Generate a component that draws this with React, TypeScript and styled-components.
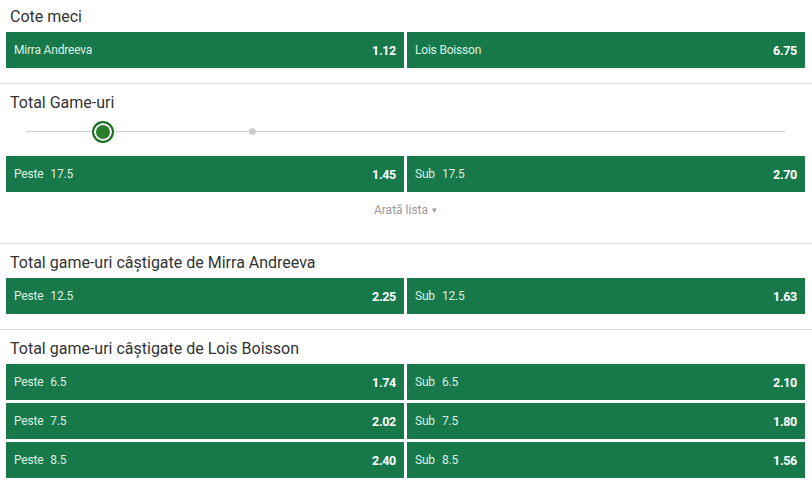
import React from 'react';
import styled, { createGlobalStyle } from 'styled-components';

const GlobalStyle = createGlobalStyle`
  html, body {
    margin: 0;
    padding: 0;
    background: #ffffff;
    font-family: Roboto, 'Liberation Sans', sans-serif;
  }
`;

interface IOdd {
  label: string;
  line?: string;
  price: string;
}

const rowsLois: IOdd[][] = [
  [
    { label: 'Peste', line: '6.5', price: '1.74' },
    { label: 'Sub', line: '6.5', price: '2.10' },
  ],
  [
    { label: 'Peste', line: '7.5', price: '2.02' },
    { label: 'Sub', line: '7.5', price: '1.80' },
  ],
  [
    { label: 'Peste', line: '8.5', price: '2.40' },
    { label: 'Sub', line: '8.5', price: '1.56' },
  ],
];

const OddButton = ({ odd }: { odd: IOdd }) => (
  <Odd>
    <OddLabel>
      {odd.label}
      {odd.line && <OddLine>{odd.line}</OddLine>}
    </OddLabel>
    <OddPrice>{odd.price}</OddPrice>
  </Odd>
);

const OddsRows = ({ rows }: { rows: IOdd[][] }) => (
  <Rows>
    {rows.map((row, i) => (
      <Row key={i}>
        {row.map((odd, j) => (
          <OddButton key={j} odd={odd} />
        ))}
      </Row>
    ))}
  </Rows>
);

export default function App() {
  return (
    <>
      <GlobalStyle />
      <Page>
        <Market $first>
          <Title>Cote meci</Title>
          <OddsRows
            rows={[
              [
                { label: 'Mirra Andreeva', price: '1.12' },
                { label: 'Lois Boisson', price: '6.75' },
              ],
            ]}
          />
        </Market>

        <Market>
          <Title>Total Game-uri</Title>
          <Slider>
            <Track />
            <Knob style={{ left: 102 }} />
            <Stop style={{ left: 253 }} />
          </Slider>
          <OddsRows
            rows={[
              [
                { label: 'Peste', line: '17.5', price: '1.45' },
                { label: 'Sub', line: '17.5', price: '2.70' },
              ],
            ]}
          />
          <ShowList>
            Arată lista <Caret>▾</Caret>
          </ShowList>
        </Market>

        <Market>
          <Title>Total game-uri câștigate de Mirra Andreeva</Title>
          <OddsRows
            rows={[
              [
                { label: 'Peste', line: '12.5', price: '2.25' },
                { label: 'Sub', line: '12.5', price: '1.63' },
              ],
            ]}
          />
        </Market>

        <Market>
          <Title>Total game-uri câștigate de Lois Boisson</Title>
          <OddsRows rows={rowsLois} />
        </Market>
      </Page>
    </>
  );
}

const Page = styled.div`
  display: flex;
  flex-direction: column;
  width: 812px;
`;

const Market = styled.section<{ $first?: boolean }>`
  display: flex;
  flex-direction: column;
  padding: 0 7px 15px 6px;
  border-top: ${p => (p.$first ? 'none' : '1px solid #dcdcdc')};
  margin-top: ${p => (p.$first ? '-2px' : '0')};
`;

const Title = styled.div`
  height: 34px;
  display: flex;
  align-items: center;
  padding: 3px 0 0 4px;
  box-sizing: border-box;
  font-size: 16px;
  color: #333333;
`;

const Rows = styled.div`
  display: flex;
  flex-direction: column;
  gap: 3px;
`;

const Row = styled.div`
  display: grid;
  grid-template-columns: 1fr 1fr;
  gap: 3px;
`;

const Odd = styled.div`
  height: 36px;
  display: flex;
  align-items: center;
  justify-content: space-between;
  padding: 0 8px 0 8px;
  background: #17794a;
  font-size: 12px;
  cursor: pointer;
`;

const OddLabel = styled.span`
  color: #dcefe3;
  letter-spacing: -0.2px;
`;

const OddLine = styled.span`
  margin-left: 7px;
`;

const OddPrice = styled.span`
  color: #ffffff;
  font-weight: 700;
  font-size: 12.5px;
  letter-spacing: -0.3px;
`;

const Slider = styled.div`
  position: relative;
  height: 28px;
  margin: 0 20px 10px 20px;
`;

const Track = styled.div`
  position: absolute;
  left: 0;
  right: 0;
  top: 13px;
  height: 1px;
  background: #cccccc;
`;

const Knob = styled.div`
  position: absolute;
  top: 3px;
  width: 22px;
  height: 22px;
  margin-left: -36px;
  box-sizing: border-box;
  border-radius: 50%;
  border: 2px solid #1f6e2a;
  background: #2a7d2a;
  box-shadow: inset 0 0 0 2px #ffffff;
`;

const Stop = styled.div`
  position: absolute;
  top: 10px;
  width: 7px;
  height: 7px;
  margin-left: -30px;
  border-radius: 50%;
  background: #cccccc;
`;

const ShowList = styled.div`
  height: 36px;
  display: flex;
  align-items: center;
  justify-content: center;
  font-size: 12px;
  color: #9a9a9a;
  gap: 4px;
`;

const Caret = styled.span`
  font-size: 9px;
`;
